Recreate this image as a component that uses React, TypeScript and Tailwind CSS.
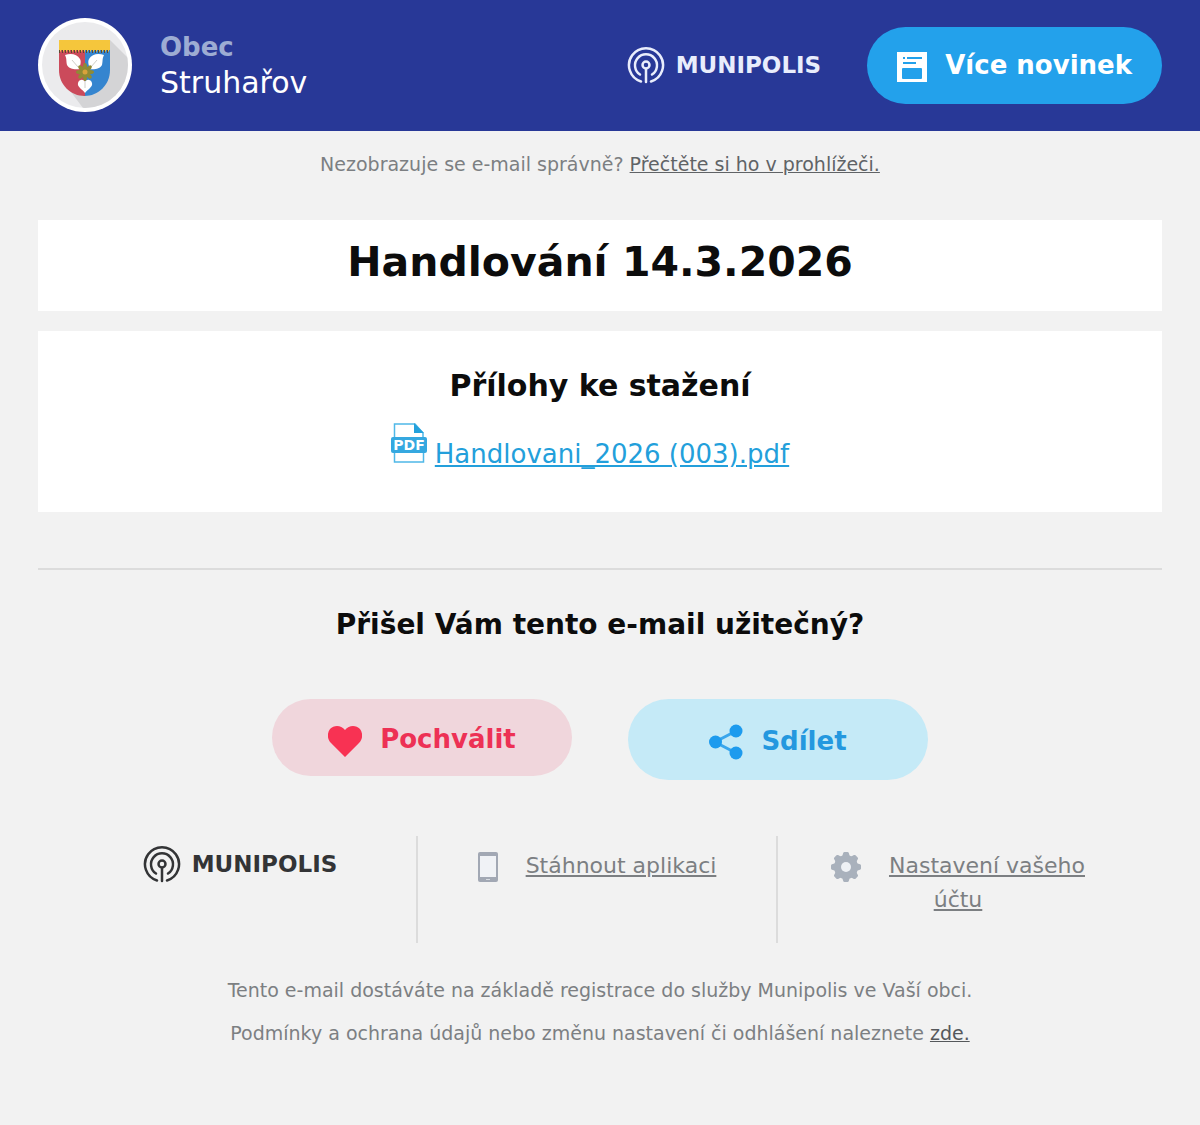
import type { ReactNode } from "react";

const ANGLES = [0, 45, 90, 135, 180, 225, 270, 315];

function Crest() {
  return (
    <svg viewBox="0 0 94 94" className="size-[94px] shrink-0" role="img" aria-label="Znak obce">
      <defs>
        <clipPath id="disc">
          <circle cx="47" cy="47" r="43" />
        </clipPath>
        <clipPath id="shield">
          <path d="M21 22h51v30c0 15-12 26-25.500 26S21 67 21 52z" />
        </clipPath>
      </defs>
      <circle cx="47" cy="47" r="47" fill="#fff" />
      <g clipPath="url(#disc)">
        <path d="M0 0h94v94H0z" fill="#ebebed" />
        <path d="M72 22l30 30v50H54L30 70z" fill="#d4d4d6" />
      </g>
      <g clipPath="url(#shield)">
        <path d="M21 21h26v60H21z" fill="#cb4a5b" />
        <path d="M47 21h26v60H47z" fill="#3585cf" />
        <path d="M21 33h52" stroke="#5c4a2e" strokeDasharray="1 2" strokeWidth="4" />
        <path d="M21 21h52v11H21z" fill="#f5c63c" />
        <path d="M22 32h52" stroke="#f5c63c" strokeDasharray="1 2" strokeWidth="3" />
      </g>
      <path d="M27 37c6-2 12-1 15 4 2 4-1 7 0 10-5 1-11 0-13-4-1-4 0-6-2-10z" fill="#fff" />
      <path d="M66 37c-6-2-12-1-15 4-2 4 1 7 0 10 5 1 11 0 13-4 1-4 0-6 2-10z" fill="#fff" />
      <path d="M47 75c-3-4-8-6-7-10 1-4 6-4 7-1 1-3 6-3 7 1 1 4-4 6-7 10z" fill="#fff" />
      <path d="M34 42l6 7M59 42l-6 7M47 64v6" stroke="#cfcfc8" fill="none" />
      <g fill="#8f8a35">
        {ANGLES.map((angle) => (
          <ellipse key={angle} cx="47" cy="49" rx="2" ry="4" transform={`rotate(${angle} 47 54)`} />
        ))}
      </g>
      <circle cx="47" cy="54" r="2.500" fill="#d9a23a" />
    </svg>
  );
}

function MunipolisLogo({ className }: { className: string }) {
  return (
    <div className={`flex items-center gap-[11px] ${className}`}>
      <svg viewBox="0 0 38 38" className="size-[38px] shrink-0" fill="none" stroke="currentColor" strokeWidth="2.500" strokeLinecap="round">
        <path d="M14 35.500A17 17 0 1 1 24 35.500" />
        <path d="M13 28.500A11 11 0 1 1 25 28.500" />
        <circle cx="19" cy="19" r="3.500" />
        <path d="M19 23v13" />
      </svg>
      <span className="text-[23px] leading-8 font-bold">MUNIPOLIS</span>
    </div>
  );
}

function NewsIcon() {
  return (
    <svg viewBox="0 0 30 30" className="mt-1 size-[30px]">
      <path d="M0 0h30v30H0z" fill="#fff" />
      <path d="M6 6h2M10 6h15M6 11h13" stroke="#23a1eb" strokeWidth="2" />
      <rect x="5" y="16" width="20" height="11" rx="1" fill="#23a1eb" />
    </svg>
  );
}

function PdfIcon() {
  return (
    <svg viewBox="0 0 36 40" className="h-10 w-9 shrink-0">
      <path d="M3.500 16V1H24l8 9v6M3.500 29v10h29V29" fill="#fff" stroke="#4fb8e8" strokeWidth="1.500" />
      <path d="M23 0l10 10H23z" fill="#23a1dc" />
      <rect y="14" width="36" height="16" rx="2" fill="#35a8e0" />
      <text x="18" y="27" textAnchor="middle" fill="#fff" fontSize="14" fontWeight="700" fontFamily="DejaVu Sans, sans-serif">
        PDF
      </text>
    </svg>
  );
}

function HeartIcon() {
  return (
    <svg viewBox="0 0 34 31" className="mt-1 h-[31px] w-[34px]">
      <path d="M17 31L3 17C-1 13-1 7 2 3c4-4 11-4 15 1 4-5 11-5 15-1 3 4 3 10-1 14z" fill="#f83253" />
    </svg>
  );
}

function ShareIcon() {
  return (
    <svg viewBox="0 0 34 36" className="h-9 w-[34px]">
      <path d="M27 7L6 18l21 11" fill="none" stroke="#3aa6ec" strokeWidth="3" />
      <g fill="#1d9bee">
        <circle cx="27" cy="7" r="6.500" />
        <circle cx="6.500" cy="18" r="6.500" />
        <circle cx="27" cy="29" r="6.500" />
      </g>
    </svg>
  );
}

function PhoneIcon() {
  return (
    <svg viewBox="0 0 20 30" className="inline h-[30px] w-5">
      <rect width="20" height="30" rx="2" fill="#a2a8b4" />
      <path d="M2 4h16v21H2z" fill="#f0f2f6" />
      <path d="M8 27.500h4" stroke="#d8dce2" />
    </svg>
  );
}

function GearIcon() {
  return (
    <svg viewBox="0 0 30 30" className="inline size-[30px]">
      <g fill="#a9b1bc">
        {ANGLES.map((angle) => (
          <path key={angle} d="M11 5l1.200-4q.3-1 1.300-1h3q1 0 1.300 1L19 5z" transform={`rotate(${angle} 15 15)`} />
        ))}
        <circle cx="15" cy="15" r="12" />
      </g>
      <circle cx="15" cy="15" r="5" fill="#eef1f5" />
    </svg>
  );
}

function FooterLink({ icon, children }: { icon: ReactNode; children: ReactNode }) {
  return (
    <p className="px-10 pt-[13px] text-center text-[22px] leading-[34px]">
      <span className="mr-7">{icon}</span>
      <a href="#" className="underline">{children}</a>
    </p>
  );
}

export default function App() {
  return (
    <div className="min-h-screen bg-[#f2f2f2] font-['DejaVu_Sans',sans-serif] text-[#7c7f82]">
      <header className="flex items-center bg-[#283897] px-[38px] pt-[18px] pb-[19px] text-white">
        <Crest />
        <div className="ml-7 text-[30px] leading-9">
          <p className="text-[26px] font-bold text-[#9dacd3]">Obec</p>
          <p>Struhařov</p>
        </div>
        <MunipolisLogo className="ml-auto text-[#e9edfc]" />
        <a href="#" className="ml-[46px] flex h-[77px] items-center gap-[18px] rounded-full bg-[#23a1eb] px-[30px] text-[26px] font-bold">
          <NewsIcon />
          Více novinek
        </a>
      </header>

      <p className="pt-[18px] text-center text-[19px] leading-[30px]">
        Nezobrazuje se e-mail správně?{" "}
        <a href="#" className="text-[#606366] underline">Přečtěte si ho v prohlížeči.</a>
      </p>

      <main className="px-[38px] pt-[41px] text-center text-[#0c0c0c]">
        <section className="bg-white pt-4 pb-[23px]">
          <h1 className="text-[41px] leading-[52px] font-bold">Handlování 14.3.2026</h1>
        </section>

        <section className="mt-5 bg-white pt-9 pb-[41px]">
          <h2 className="text-[30px] leading-[38px] font-bold">Přílohy ke stažení</h2>
          <div className="mt-[18px] mr-5 flex items-start justify-center gap-2">
            <PdfIcon />
            <a href="#" className="pt-3.5 text-[26px] leading-[34px] text-[#239fdb] underline">
              Handlovani_2026 (003).pdf
            </a>
          </div>
        </section>

        <hr className="mt-14 border-t-2 border-[#dcdcdc]" />

        <h2 className="mt-9 text-[28px] leading-[38px] font-bold">Přišel Vám tento e-mail užitečný?</h2>

        <div className="mt-[55px] flex items-start justify-center gap-14 text-[26px] font-bold">
          <button className="flex h-[77px] w-[300px] items-center justify-center gap-[18px] rounded-full bg-[#f0d6dc] pt-1 text-[#ed3155]">
            <HeartIcon />
            Pochválit
          </button>
          <button className="flex h-[81px] w-[300px] items-center justify-center gap-[18px] rounded-full bg-[#c5eaf7] pt-1 text-[#2498df]">
            <ShareIcon />
            Sdílet
          </button>
        </div>
      </main>

      <footer className="pt-14 pb-16">
        <div className="grid grid-cols-3 pr-[62px] pl-[58px]">
          <div className="h-[107px] border-r-2 border-[#dcdcdc] pt-[9px] pl-1.5">
            <MunipolisLogo className="justify-center text-[#333436]" />
          </div>
          <div className="h-[107px] border-r-2 border-[#dcdcdc]">
            <FooterLink icon={<PhoneIcon />}>Stáhnout aplikaci</FooterLink>
          </div>
          <FooterLink icon={<GearIcon />}>Nastavení vašeho účtu</FooterLink>
        </div>

        <div className="mt-8 space-y-[13px] text-center text-[19px] leading-[30px]">
          <p>Tento e-mail dostáváte na základě registrace do služby Munipolis ve Vaší obci.</p>
          <p>
            Podmínky a ochrana údajů nebo změnu nastavení či odhlášení naleznete{" "}
            <a href="#" className="text-[#55585b] underline">zde.</a>
          </p>
        </div>
      </footer>
    </div>
  );
}
